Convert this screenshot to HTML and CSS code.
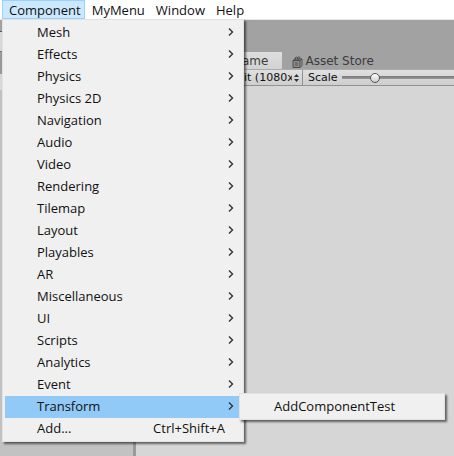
FILE: index.html
```html
<!DOCTYPE html>
<html lang="en">
<head>
<meta charset="utf-8">
<title>Component menu</title>
<link rel="stylesheet" href="styles.css">
</head>
<body>
<svg class="defs" aria-hidden="true">
  <symbol id="chevron" viewBox="0 0 6 10"><path d="M1 1.5 4.5 5 1 8.5" fill="none" stroke="currentColor" stroke-width="1.4"/></symbol>
</svg>
<nav class="menubar">
  <button class="menubar-item open">Component</button>
  <button class="menubar-item">MyMenu</button>
  <button class="menubar-item">Window</button>
  <button class="menubar-item">Help</button>
</nav>
<main class="workspace">
  <section class="side">
    <div class="side-top"></div>
    <div class="side-tab"></div>
    <div class="side-bar"></div>
  </section>
  <section class="game">
    <div class="tabs">
      <button class="tab active">ame</button>
      <button class="tab">
        <svg class="store" viewBox="0 0 11 12" aria-hidden="true">
          <path d="M1 4.500h7v7H1z" fill="#8c8c8c" stroke="#4c4c4c"/>
          <path d="M8 4.500 10 3v6.500L8 11.500M1 4.500 3 3h7M3 4V2q1.500-2 3 0v2M5.500 3V1.500q1.500-1.500 2.500 0V3" fill="none" stroke="#4c4c4c"/>
          <path d="M3 7h3M3 9h3" stroke="#555"/>
        </svg>
        Asset Store
      </button>
    </div>
    <div class="toolbar">
      <span class="aspect">
        <select class="aspect-select" aria-label="Aspect"><option>it (1080x</option></select>
        <svg class="updown" viewBox="0 0 5 8" aria-hidden="true"><path d="M0 3 2.500 0 5 3zM0 5h5L2.500 8z" fill="#333"/></svg>
      </span>
      <label class="scale-label" for="scale">Scale</label>
      <input class="scale" id="scale" type="range" min="0" max="100" value="28">
    </div>
    <div class="viewport"></div>
  </section>
</main>
<div class="menu component-menu">
  <button class="item">Mesh<svg class="chevron"><use href="#chevron"/></svg></button>
  <button class="item">Effects<svg class="chevron"><use href="#chevron"/></svg></button>
  <button class="item">Physics<svg class="chevron"><use href="#chevron"/></svg></button>
  <button class="item">Physics 2D<svg class="chevron"><use href="#chevron"/></svg></button>
  <button class="item">Navigation<svg class="chevron"><use href="#chevron"/></svg></button>
  <button class="item">Audio<svg class="chevron"><use href="#chevron"/></svg></button>
  <button class="item">Video<svg class="chevron"><use href="#chevron"/></svg></button>
  <button class="item">Rendering<svg class="chevron"><use href="#chevron"/></svg></button>
  <button class="item">Tilemap<svg class="chevron"><use href="#chevron"/></svg></button>
  <button class="item">Layout<svg class="chevron"><use href="#chevron"/></svg></button>
  <button class="item">Playables<svg class="chevron"><use href="#chevron"/></svg></button>
  <button class="item">AR<svg class="chevron"><use href="#chevron"/></svg></button>
  <button class="item">Miscellaneous<svg class="chevron"><use href="#chevron"/></svg></button>
  <button class="item">UI<svg class="chevron"><use href="#chevron"/></svg></button>
  <button class="item">Scripts<svg class="chevron"><use href="#chevron"/></svg></button>
  <button class="item">Analytics<svg class="chevron"><use href="#chevron"/></svg></button>
  <button class="item">Event<svg class="chevron"><use href="#chevron"/></svg></button>
  <div class="parent">
    <button class="item selected">Transform<svg class="chevron"><use href="#chevron"/></svg></button>
    <div class="menu submenu"><button class="item">AddComponentTest</button></div>
  </div>
  <button class="item">Add...<span class="shortcut">Ctrl+Shift+A</span></button>
</div>
</body>
</html>
```
FILE: styles.css
```css
* { box-sizing: border-box; }

body {
  margin: 0;
  min-height: 100vh;
  display: flex;
  flex-direction: column;
  overflow: hidden;
  background: #d6d6d6;
  font: 13px/18px "Open Sans", "Noto Sans", sans-serif;
  color: #111;
}

button {
  margin: 0;
  border: 0;
  padding: 0;
  background: none;
  font: inherit;
  color: inherit;
  text-align: left;
  white-space: nowrap;
}

.defs { position: absolute; width: 0; height: 0; }

.menubar {
  display: flex;
  height: 20px;
  padding-left: 2px;
  background: #fff;
  border-bottom: 1px solid #e8e8e8;
}

.menubar-item { padding: 0 4px 0 7px; }

.menubar-item.open {
  background: #cce8ff;
  box-shadow: inset 0 0 0 1px #99d1ff;
}

.workspace {
  flex: 1;
  display: flex;
  background: #a2a2a2;
}

.side {
  width: 136px;
  display: flex;
  flex-direction: column;
  background: #c2c2c2;
  border-right: 3px solid #999;
}

.side-top { height: 12px; background: #a2a2a2; border-bottom: 1px solid #555; }
.side-tab { height: 20px; background: #d8d8d8; border-bottom: 1px solid #777; }
.side-bar { height: 38px; background: #999; border-bottom: 16px solid #d8d8d8; }

.game {
  flex: 1;
  min-width: 0;
  display: flex;
  flex-direction: column;
}

.tabs {
  display: flex;
  height: 49px;
  padding: 32px 0 0 98px;
  font: 12px/17px "DejaVu Sans", sans-serif;
  color: #3c3c3c;
}

.tab {
  display: flex;
  align-items: center;
  gap: 2px;
  padding: 2px 10px 0;
}

.tab.active {
  padding: 2px 14px 0 8px;
  background: linear-gradient(#dedede, #d2d2d2);
}

.store { width: 11px; height: 12px; }

.toolbar {
  display: flex;
  align-items: center;
  height: 17px;
  padding-left: 108px;
  background: linear-gradient(#e0e0e0, #cecece);
  border-top: 1px solid #aaa;
  border-bottom: 1px solid #929292;
  font: 11px/15px "DejaVu Sans", sans-serif;
  color: #111;
}

.aspect {
  display: flex;
  align-items: center;
  gap: 2px;
  padding-right: 3px;
  border-right: 1px solid #929292;
}

.aspect-select {
  appearance: none;
  width: 48px;
  height: 15px;
  border: 0;
  padding: 0;
  background: none;
  font: inherit;
  color: inherit;
}

.updown { width: 5px; height: 8px; }

.scale-label { padding: 0 4px 0 5px; }

.scale {
  appearance: none;
  flex: 1;
  min-width: 0;
  height: 12px;
  margin: 0;
  background: linear-gradient(#777, #999) center / 100% 3px no-repeat;
}

.scale::-webkit-slider-thumb {
  appearance: none;
  width: 10px;
  height: 10px;
  border: 1px solid #555;
  border-radius: 50%;
  background: linear-gradient(#fff, #ccc);
}

.viewport { flex: 1; background: #d6d6d6; }

.menu {
  position: absolute;
  padding: 2px 2px 1px;
  background: #f0f0f0;
  border: 1px solid #e2e2e2;
  box-shadow: 2px 2px 2px rgb(0 0 0 / 55%);
}

.component-menu { top: 19px; left: 2px; width: 242px; }

.item {
  display: flex;
  align-items: center;
  width: 100%;
  height: 22px;
  padding: 0 7px 2px 32px;
}

.item.selected { background: #91c9f7; }

.chevron {
  width: 6px;
  height: 10px;
  margin-left: auto;
  color: #333;
}

.shortcut { margin-left: auto; padding-right: 9px; }

.parent { position: relative; }

.submenu { top: -3px; left: 234px; width: 206px; }
```
